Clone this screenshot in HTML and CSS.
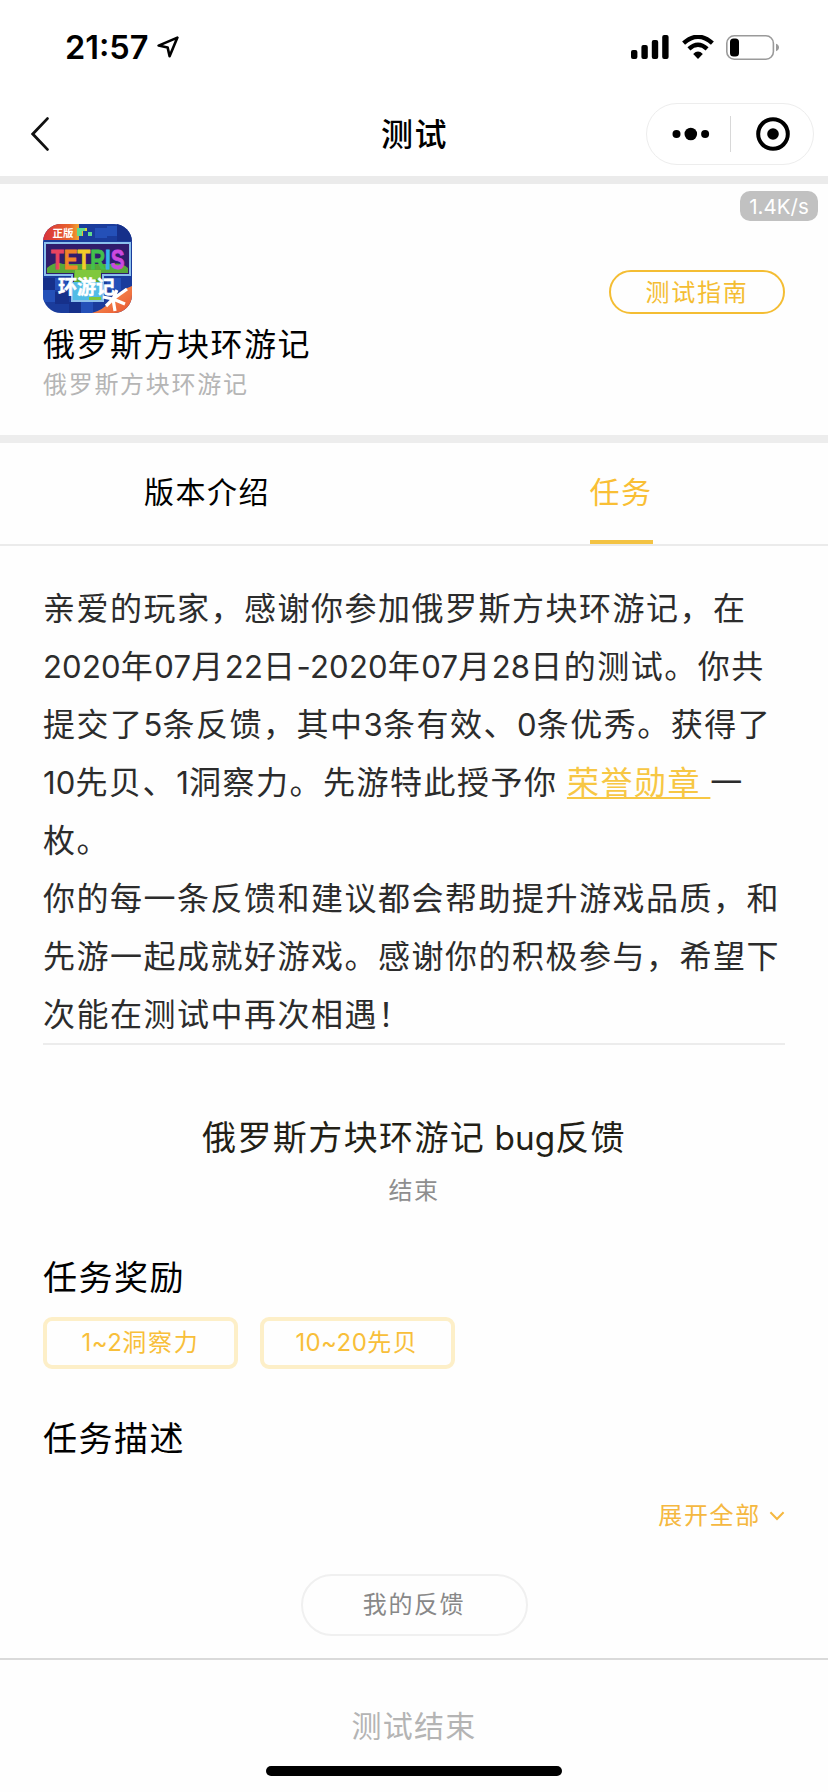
FILE: index.html
```html
<!DOCTYPE html>
<html lang="zh-CN">
<head>
    <meta charset="UTF-8">
    <meta name="viewport" content="width=device-width, initial-scale=1.0">
    <title>测试</title>
    <link rel="stylesheet" href="styles.css">
</head>
<body>
    <div class="status-bar">
        <div class="status-left">
            <span class="time">21:57</span>
            <svg class="location" viewBox="0 0 22 22">
                <path d="M20.4 1.6L1.6 9.6L10.6 11.4L12.6 20.2Z"/>
            </svg>
        </div>
        <div class="status-right">
            <svg class="signal" viewBox="0 0 38 24">
                <rect x="0" y="15" width="6.4" height="9" rx="2"/>
                <rect x="10.4" y="10" width="6.4" height="14" rx="2"/>
                <rect x="20.8" y="5" width="6.4" height="19" rx="2"/>
                <rect x="31.2" y="0" width="6.4" height="24" rx="2"/>
            </svg>
            <svg class="wifi" viewBox="0 0 32 24">
                <path class="wave" d="M1.6 8.2Q16 -4.6 30.4 8.2"/>
                <path class="wave" d="M6.9 13.8Q16 5.6 25.1 13.8"/>
                <path d="M16 24L11.2 18.9Q16 14.3 20.8 18.9Z"/>
            </svg>
            <svg class="battery" viewBox="0 0 54 25">
                <rect class="shell" x="0.8" y="0.8" width="46.6" height="23.4" rx="7.5"/>
                <rect x="4" y="3.6" width="9" height="17.8" rx="3.5"/>
                <path class="nub" d="M50 8.8C54 10 54 15 50 16.2Z"/>
            </svg>
        </div>
    </div>

    <div class="nav">
        <svg class="back" viewBox="0 0 18 34">
            <path d="M16.4 1.6L1.8 17L16.4 32.4"/>
        </svg>
        <h1>测试</h1>
        <div class="capsule">
            <svg class="more" viewBox="0 0 38 14">
                <circle cx="4.5" cy="7" r="4"/>
                <circle cx="18.8" cy="7" r="6.3"/>
                <circle cx="33.1" cy="7" r="4"/>
            </svg>
            <span class="capsule-line"></span>
            <svg class="close" viewBox="0 0 34 34">
                <circle class="ring" cx="17" cy="17" r="14.8"/>
                <circle cx="17" cy="17" r="5.8"/>
            </svg>
        </div>
    </div>

    <div class="app-info">
        <span class="speed">1.4K/s</span>
        <div class="app-left">
            <svg class="app-icon" viewBox="0 0 89 89">
                <defs>
                    <clipPath id="round"><rect width="89" height="89" rx="18"/></clipPath>
                    <linearGradient id="corner" x1="0" y1="0" x2="1" y2="0">
                        <stop offset="0" stop-color="#d8323c"/>
                        <stop offset="0.6" stop-color="#e8632c"/>
                        <stop offset="0.8" stop-color="#f0a030"/>
                        <stop offset="1" stop-color="#d9dc3c"/>
                    </linearGradient>
                    <linearGradient id="orange" x1="0" y1="0" x2="1" y2="1">
                        <stop offset="0" stop-color="#f8a35c"/>
                        <stop offset="1" stop-color="#ea5530"/>
                    </linearGradient>
                </defs>
                <g clip-path="url(#round)">
                    <rect width="89" height="89" fill="#1a3c9c"/>
                    <path fill="#2450b8" d="M52 4h12v10H52zM64 12h10V2H64zM12 54h12v12H12zM0 66h12v12H0zM64 54h14v12H64zM38 78h12v11H38z"/>
                    <path fill="#16308a" d="M74 0h15v17H74zM0 54h12v12H0zM12 68h14v12H12zM26 78h12v11H26z"/>
                    <path fill="url(#corner)" d="M0 0h36v4h8v3h-4v5h-4v4H0z"/>
                    <path fill="#5fdc8c" d="M34 4h8v3h-3v5h-5zM45 8h4v4h-4z"/>
                    <path fill="#301c6c" stroke="#8cc0ec" stroke-width="2" d="M2 19h85v32H60v26H29V51H2z"/>
                    <path fill="#58a838" d="M4 44q8 -7 16 -4h50q8 -2 15 4v5H58v10H31V49H4z"/>
                    <path fill="#52bce6" d="M30 58h29v18H30z"/>
                    <path fill="#80c83c" d="M32 46h26v9H32zM46 73h12v3H46z"/>
                    <g transform="translate(8 45) scale(0.74 1)">
                        <text class="tetris"><tspan fill="#ea4460" stroke="#ea4460">T</tspan><tspan fill="#f08428" stroke="#f08428">E</tspan><tspan fill="#f2cc28" stroke="#f2cc28">T</tspan><tspan fill="#42c04c" stroke="#42c04c">R</tspan><tspan fill="#34b4ec" stroke="#34b4ec">I</tspan><tspan fill="#cc48e0" stroke="#cc48e0">S</tspan></text>
                    </g>
                    <path fill="url(#orange)" d="M49 89Q60 86 68 77Q77 66 89 62V89z"/>
                    <text class="tour" x="15" y="69.5">环游记</text>
                    <text class="genuine" x="9.5" y="12.5">正版</text>
                    <path class="spark" d="M70 75L74 66M70 75L82 80M70 75L72 87M70 75L63 82M70 75L60 73M70 75L84 65"/>
                </g>
            </svg>
            <div class="app-name">俄罗斯方块环游记</div>
            <div class="app-desc">俄罗斯方块环游记</div>
        </div>
        <button class="guide-btn">测试指南</button>
    </div>

    <div class="tabs">
        <div class="tab"><span>版本介绍</span></div>
        <div class="tab active"><span>任务</span></div>
    </div>

    <div class="content">
        <div class="letter">
            亲爱的玩家，感谢你参加俄罗斯方块环游记，在<br><i>2020</i>年<i>07</i>月<i>22</i>日<i>-2020</i>年<i>07</i>月<i>28</i>日的测试。你共<br>提交了<i>5</i>条反馈，其中<i>3</i>条有效、<i>0</i>条优秀。获得了<br><i>10</i>先贝、<i>1</i>洞察力。先游特此授予你 <a class="medal">荣誉勋章&nbsp;</a>一<br>枚。<br>你的每一条反馈和建议都会帮助提升游戏品质，和<br>先游一起成就好游戏。感谢你的积极参与，希望下<br>次能在测试中再次相遇！
        </div>

        <h2 class="task-title">俄罗斯方块环游记<i> bug</i>反馈</h2>
        <div class="task-state">结束</div>

        <h3>任务奖励</h3>
        <div class="rewards">
            <span class="reward"><i>1~2</i>洞察力</span>
            <span class="reward"><i>10~20</i>先贝</span>
        </div>

        <h3>任务描述</h3>
        <div class="expand">
            <span>展开全部</span>
            <svg viewBox="0 0 16 10"><path d="M1.4 1.2L8 8L14.6 1.2"/></svg>
        </div>

        <button class="feedback-btn">我的反馈</button>
    </div>

    <div class="footer">
        <div class="footer-text">测试结束</div>
        <div class="home-bar"></div>
    </div>
</body>
</html>
```
FILE: styles.css
```css
* {
    margin: 0;
    padding: 0;
    box-sizing: border-box;
}

body {
    font-family: Roboto, 'Noto Sans CJK SC', sans-serif;
    font-weight: 400;
    background: #fefefe;
    color: #000;
    width: 828px;
    height: 1792px;
    overflow: hidden;
    display: flex;
    flex-direction: column;
}

svg {
    display: block;
    flex-shrink: 0;
}

button {
    background: none;
    font-family: inherit;
}

/* latin text and digits inside chinese text */
i {
    font-family: Inter, sans-serif;
    font-style: normal;
    font-size: 0.97em;
    letter-spacing: 0.2px;
    line-height: 0;
}

/* status bar */
.status-bar {
    height: 92px;
    padding: 0 49px 0 65px;
    display: flex;
    justify-content: space-between;
    background: #fff;
}

.status-left {
    display: flex;
    padding-top: 27px;
}

.time {
    width: 92px;
    font-family: Inter, sans-serif;
    font-size: 32.5px;
    font-weight: 600;
    line-height: 41px;
}

.location {
    width: 22px;
    height: 22px;
    margin-top: 9px;
    fill: none;
    stroke: #000;
    stroke-width: 2.6;
    stroke-linejoin: round;
}

.status-right {
    display: flex;
    padding-top: 35px;
}

.signal {
    width: 38px;
    height: 24px;
    margin-right: 13px;
}

.wifi {
    width: 32px;
    height: 24px;
    margin-right: 12px;
}

.wave {
    fill: none;
    stroke: #000;
    stroke-width: 4.4;
}

.battery {
    width: 54px;
    height: 25px;
    margin-right: -1px;
}

.shell {
    fill: none;
    stroke: #9a9a9a;
    stroke-width: 1.6;
}

.nub {
    fill: #9a9a9a;
}

/* nav */
.nav {
    height: 84px;
    padding: 0 14px 0 31px;
    display: grid;
    grid-template-columns: 168px 1fr 168px;
    align-items: center;
    background: #fff;
}

.back {
    width: 18px;
    height: 34px;
    fill: none;
    stroke: #111;
    stroke-width: 2.8;
    stroke-linecap: round;
}

.nav h1 {
    font-size: 32px;
    font-weight: 500;
    letter-spacing: 1.5px;
    text-align: center;
    padding: 0 16px 4px 0;
}

.capsule {
    height: 62px;
    border: 1.5px solid #ededed;
    border-radius: 31px;
    display: flex;
    align-items: center;
    padding-left: 25px;
}

.more {
    width: 38px;
    height: 14px;
}

.capsule-line {
    width: 1px;
    height: 36px;
    margin: 0 25px 0 20px;
    background: #d8d8d8;
}

.close {
    width: 34px;
    height: 34px;
}

.ring {
    fill: none;
    stroke: #000;
    stroke-width: 4;
}

/* app info */
.app-info {
    position: relative;
    height: 267px;
    padding: 40px 43px 0;
    border-top: 8px solid #ebebeb;
    border-bottom: 8px solid #ededed;
    display: flex;
    justify-content: space-between;
}

.speed {
    position: absolute;
    top: 7px;
    right: 10px;
    width: 78px;
    height: 30px;
    border-radius: 10px;
    background: #c1c1c1;
    color: #fff;
    font-family: Inter, sans-serif;
    font-size: 20.5px;
    line-height: 31px;
    text-align: center;
}

.app-icon {
    width: 89px;
    height: 89px;
}

.tetris {
    font-family: 'Liberation Sans', sans-serif;
    font-size: 28px;
    font-weight: 700;
    stroke-width: 0.8;
}

.tour {
    font-family: 'Noto Sans CJK SC', sans-serif;
    font-size: 19px;
    font-weight: 700;
    fill: #fff;
    stroke: #fff;
    stroke-width: 0.5;
}

.genuine {
    font-family: 'Noto Sans CJK SC', sans-serif;
    font-size: 10.5px;
    font-weight: 700;
    fill: #fff;
}

.spark {
    fill: none;
    stroke: #fff;
    stroke-width: 3.2;
}

.app-name {
    margin-top: 9px;
    font-size: 32px;
    letter-spacing: 1.5px;
    line-height: 46px;
}

.app-desc {
    font-size: 24px;
    letter-spacing: 1.7px;
    line-height: 34px;
    color: #b5b5b5;
}

.guide-btn {
    width: 176px;
    height: 44px;
    margin-top: 46px;
    padding-top: 2px;
    border: 2px solid #f4bd33;
    border-radius: 22px;
    color: #f4bd33;
    font-size: 24px;
    letter-spacing: 1.8px;
    line-height: 38px;
}

/* tabs */
.tabs {
    height: 103px;
    border-bottom: 2px solid #ebebeb;
    display: flex;
}

.tab {
    flex: 1;
    display: flex;
    justify-content: center;
}

.tab span {
    height: 101px;
    padding-top: 2px;
    font-size: 30px;
    letter-spacing: 1.5px;
    line-height: 96px;
}

.tab.active span {
    color: #f9bf35;
    border-bottom: 4px solid #f3c344;
}

/* content */
.content {
    height: 1112px;
    padding: 34px 43px 0;
}

.letter {
    height: 465px;
    border-bottom: 2px solid #ececec;
    color: #2c2c2c;
    font-size: 32px;
    letter-spacing: 1.5px;
    line-height: 58px;
    white-space: nowrap;
}

.medal {
    color: #f7c744;
    text-decoration: underline;
    text-decoration-thickness: 2px;
    text-underline-offset: 3px;
}

.task-title {
    margin-top: 69px;
    font-size: 34px;
    font-weight: 400;
    letter-spacing: 1.4px;
    line-height: 48px;
    text-align: center;
    color: #231f16;
}

.task-title i {
    font-size: 0.98em;
    letter-spacing: 0;
}

.task-state {
    margin-top: 12px;
    font-size: 24px;
    letter-spacing: 1.6px;
    line-height: 34px;
    text-align: center;
    color: #8e8e8e;
}

h3 {
    font-size: 34px;
    font-weight: 400;
    letter-spacing: 1.5px;
    line-height: 48px;
}

.task-state + h3 {
    margin-top: 46px;
}

.rewards {
    margin: 15px 0 46px;
    display: flex;
    gap: 21.5px;
}

.reward {
    width: 195px;
    height: 52px;
    border: 4px solid #fdefc8;
    border-radius: 9px;
    color: #f8bf3a;
    font-size: 24px;
    letter-spacing: 1.7px;
    line-height: 45px;
    text-align: center;
}

.reward i {
    font-size: 1em;
    letter-spacing: 0.4px;
}

.expand {
    margin-top: 36px;
    display: flex;
    align-items: center;
    justify-content: flex-end;
    color: #f5b840;
    font-size: 24px;
    letter-spacing: 1.7px;
    line-height: 34px;
}

.expand svg {
    width: 16px;
    height: 10px;
    margin-left: 8px;
    fill: none;
    stroke: #f5b840;
    stroke-width: 2;
}

.feedback-btn {
    display: block;
    width: 227px;
    height: 62px;
    margin: 41px auto 0;
    padding-bottom: 5px;
    border: 2px solid #f0f0f0;
    border-radius: 31px;
    color: #888;
    font-size: 24px;
    letter-spacing: 1.6px;
}

/* footer */
.footer {
    height: 134px;
    border-top: 2px solid #dadada;
    display: flex;
    flex-direction: column;
    align-items: center;
}

.footer-text {
    margin-top: 46px;
    font-size: 30px;
    letter-spacing: 1.3px;
    line-height: 42px;
    color: #b4b4b4;
}

.home-bar {
    width: 296px;
    height: 10px;
    margin-top: 18px;
    border-radius: 5px;
    background: #000;
}
```
